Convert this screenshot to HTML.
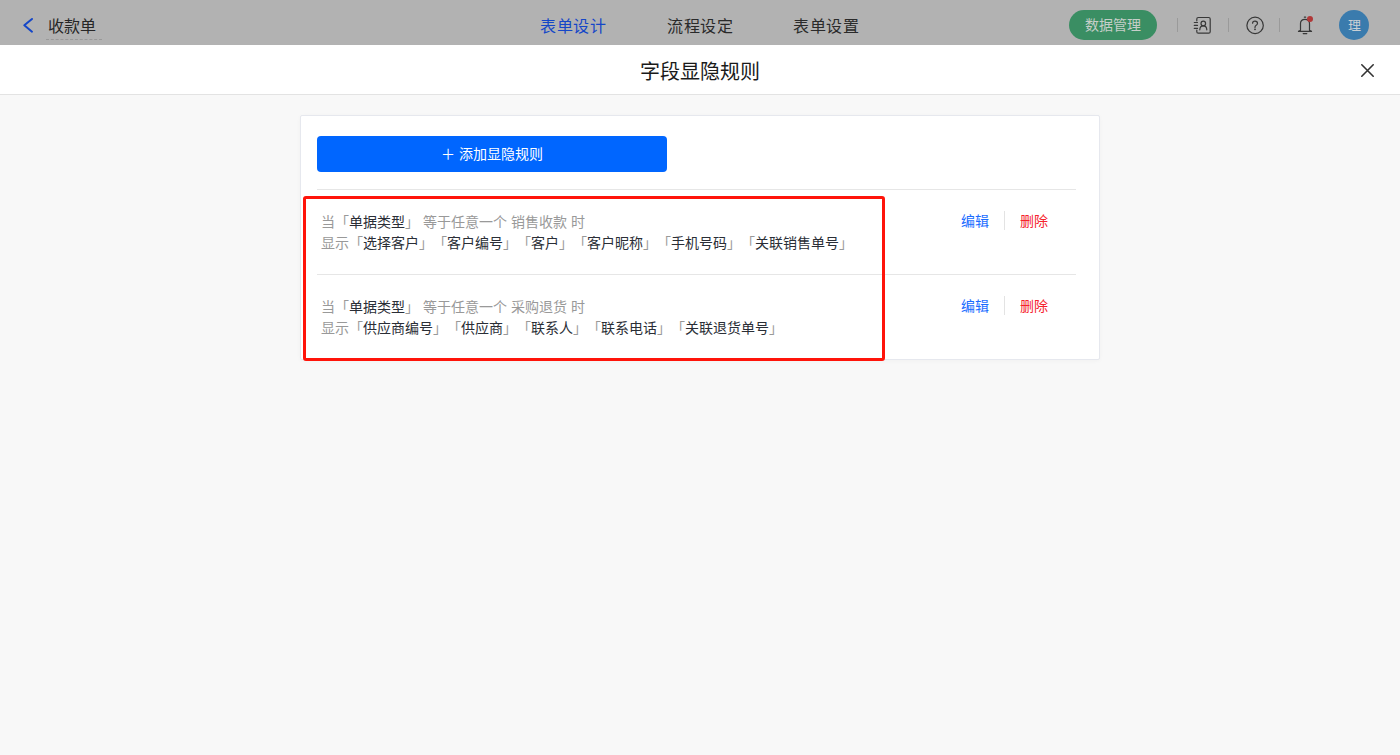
<!DOCTYPE html>
<html lang="zh-CN">
<head>
<meta charset="utf-8">
<style>
*{margin:0;padding:0;box-sizing:border-box}
html,body{width:1400px;height:755px;overflow:hidden}
body{font-family:"Liberation Sans",sans-serif;text-spacing-trim:space-all;background:#f8f8f8;position:relative;color:#333}
.abs{position:absolute;white-space:nowrap}
#top{position:absolute;left:0;top:0;width:1400px;height:45px;background:#b2b2b2}
#modalhd{position:absolute;left:0;top:45px;width:1400px;height:50px;background:#fff;border-bottom:1px solid #e3e3e3}
.t16{font-size:16px;line-height:16px}
.card{position:absolute;left:300px;top:115px;width:800px;height:245px;background:#fff;border:1px solid #e6e8ee;border-radius:2px;box-shadow:0 1px 4px rgba(0,0,0,0.03)}
.btn{position:absolute;left:317px;top:136px;width:350px;height:36px;background:#0066ff;border-radius:4px;color:#fff;font-size:14px;text-align:center;line-height:36px}
.hr{position:absolute;left:317px;width:759px;height:1px;background:#e6e6e6}
.rule{position:absolute;left:321px;font-size:14px;line-height:21px;color:#999}
.rule b{font-weight:normal;color:#2a2e36}
.op{position:absolute;font-size:14px;line-height:14px}
.sep{position:absolute;width:1px;background:#e3e3e3}
.red{position:absolute;left:303px;top:196px;width:582px;height:165px;border:3px solid #ff140a;border-radius:3px}
</style>
</head>
<body>
<div id="top">
  <svg class="abs" style="left:22px;top:17px" width="14" height="17" viewBox="0 0 14 17"><path d="M10 2 L2.3 8.35 L10 14.7" fill="none" stroke="#1446c8" stroke-width="2" stroke-linecap="round" stroke-linejoin="round"/></svg>
  <div class="abs t16" style="left:48px;top:19px;color:#262626">收款单</div>
  <div class="abs" style="left:46px;top:39px;width:56px;height:0;border-top:1px dashed #999"></div>
  <div class="abs t16" style="left:540px;top:19px;letter-spacing:0.5px;color:#1446c8">表单设计</div>
  <div class="abs t16" style="left:667px;top:19px;letter-spacing:0.5px;color:#2a2a2a">流程设定</div>
  <div class="abs t16" style="left:793px;top:19px;letter-spacing:0.5px;color:#2a2a2a">表单设置</div>
  <div class="abs" style="left:1069px;top:10px;width:88px;height:30px;border-radius:15px;background:#3a8e63;color:#c6cec9;font-size:14px;line-height:30px;text-align:center">数据管理</div>
  <div class="sep" style="left:1177px;top:18px;height:14px;background:#9a9a9a"></div>
  <div class="sep" style="left:1228px;top:18px;height:14px;background:#9a9a9a"></div>
  <div class="sep" style="left:1279px;top:18px;height:14px;background:#9a9a9a"></div>
  <svg class="abs" style="left:0;top:0" width="1400" height="45" viewBox="0 0 1400 45">
    <g fill="none" stroke="#383838" stroke-width="1.2" stroke-linecap="round" stroke-linejoin="round">
      <path d="M1196.8 20.8 V19 Q1196.8 17.5 1198.3 17.5 H1208.7 Q1210.2 17.5 1210.2 19 V31.7 Q1210.2 33.2 1208.7 33.2 H1198.3 Q1196.8 33.2 1196.8 31.7 V30"/>
      <path d="M1194.3 22.5 H1197.5 M1194.3 25.4 H1197.5 M1194.3 28.4 H1197.5"/>
      <circle cx="1203.3" cy="23.5" r="2.3"/>
      <path d="M1199.8 29.8 Q1200 25.9 1203.3 25.9 Q1206.6 25.9 1206.8 29.8"/>
      <circle cx="1255.1" cy="25.4" r="8.2"/>
      <path d="M1252.6 23.2 Q1252.6 21.2 1255 21.2 Q1257.5 21.2 1257.5 23.3 Q1257.5 24.7 1255.9 25.5 Q1255 26 1255 27.2 V27.6"/>
      <path d="M1300.5 30.3 V23.6 Q1300.5 19.3 1305 19.3 Q1309.5 19.3 1309.5 23.6 V30.3 L1311.5 31.4 H1298.5 Z"/>
      <path d="M1303.2 33.6 H1306.8"/>
    </g>
    <circle cx="1255" cy="29.3" r="0.9" fill="#383838"/>
    <rect x="1303.8" y="16.4" width="2.4" height="1.3" rx="0.5" fill="#383838"/>
    <circle cx="1310" cy="18.9" r="3" fill="#b03838"/>
  </svg>
  <div class="abs" style="left:1339px;top:10px;width:30px;height:30px;border-radius:50%;background:#3a7bad;color:#c9cfd4;font-size:13px;line-height:32px;text-align:center">理</div>
</div>
<div id="modalhd">
  <div class="abs" style="left:640px;top:17px;font-size:20px;line-height:20px;color:#1a1a1a">字段显隐规则</div>
  <svg class="abs" style="left:1360px;top:63px;margin-top:-45px" width="15" height="15" viewBox="0 0 15 15"><path d="M1.8 1.8 L13.2 13.2 M13.2 1.8 L1.8 13.2" stroke="#333" stroke-width="1.6" stroke-linecap="round"/></svg>
</div>
<div class="card"></div>
<div class="btn">＋ 添加显隐规则</div>
<div class="hr" style="top:189px"></div>
<div class="rule" style="top:212px">当「<b>单据类型</b>」 等于任意一个 销售收款 时<br>显示「<b>选择客户</b>」「<b>客户编号</b>」「<b>客户</b>」「<b>客户昵称</b>」「<b>手机号码</b>」「<b>关联销售单号</b>」</div>
<div class="op" style="left:961px;top:214px;color:#1a6cff">编辑</div>
<div class="sep" style="left:1004px;top:211px;height:19px"></div>
<div class="op" style="left:1020px;top:214px;color:#f5222d">删除</div>
<div class="hr" style="top:274px"></div>
<div class="rule" style="top:297px">当「<b>单据类型</b>」 等于任意一个 采购退货 时<br>显示「<b>供应商编号</b>」「<b>供应商</b>」「<b>联系人</b>」「<b>联系电话</b>」「<b>关联退货单号</b>」</div>
<div class="op" style="left:961px;top:299px;color:#1a6cff">编辑</div>
<div class="sep" style="left:1004px;top:296px;height:19px"></div>
<div class="op" style="left:1020px;top:299px;color:#f5222d">删除</div>
<div class="red"></div>
</body>
</html>
